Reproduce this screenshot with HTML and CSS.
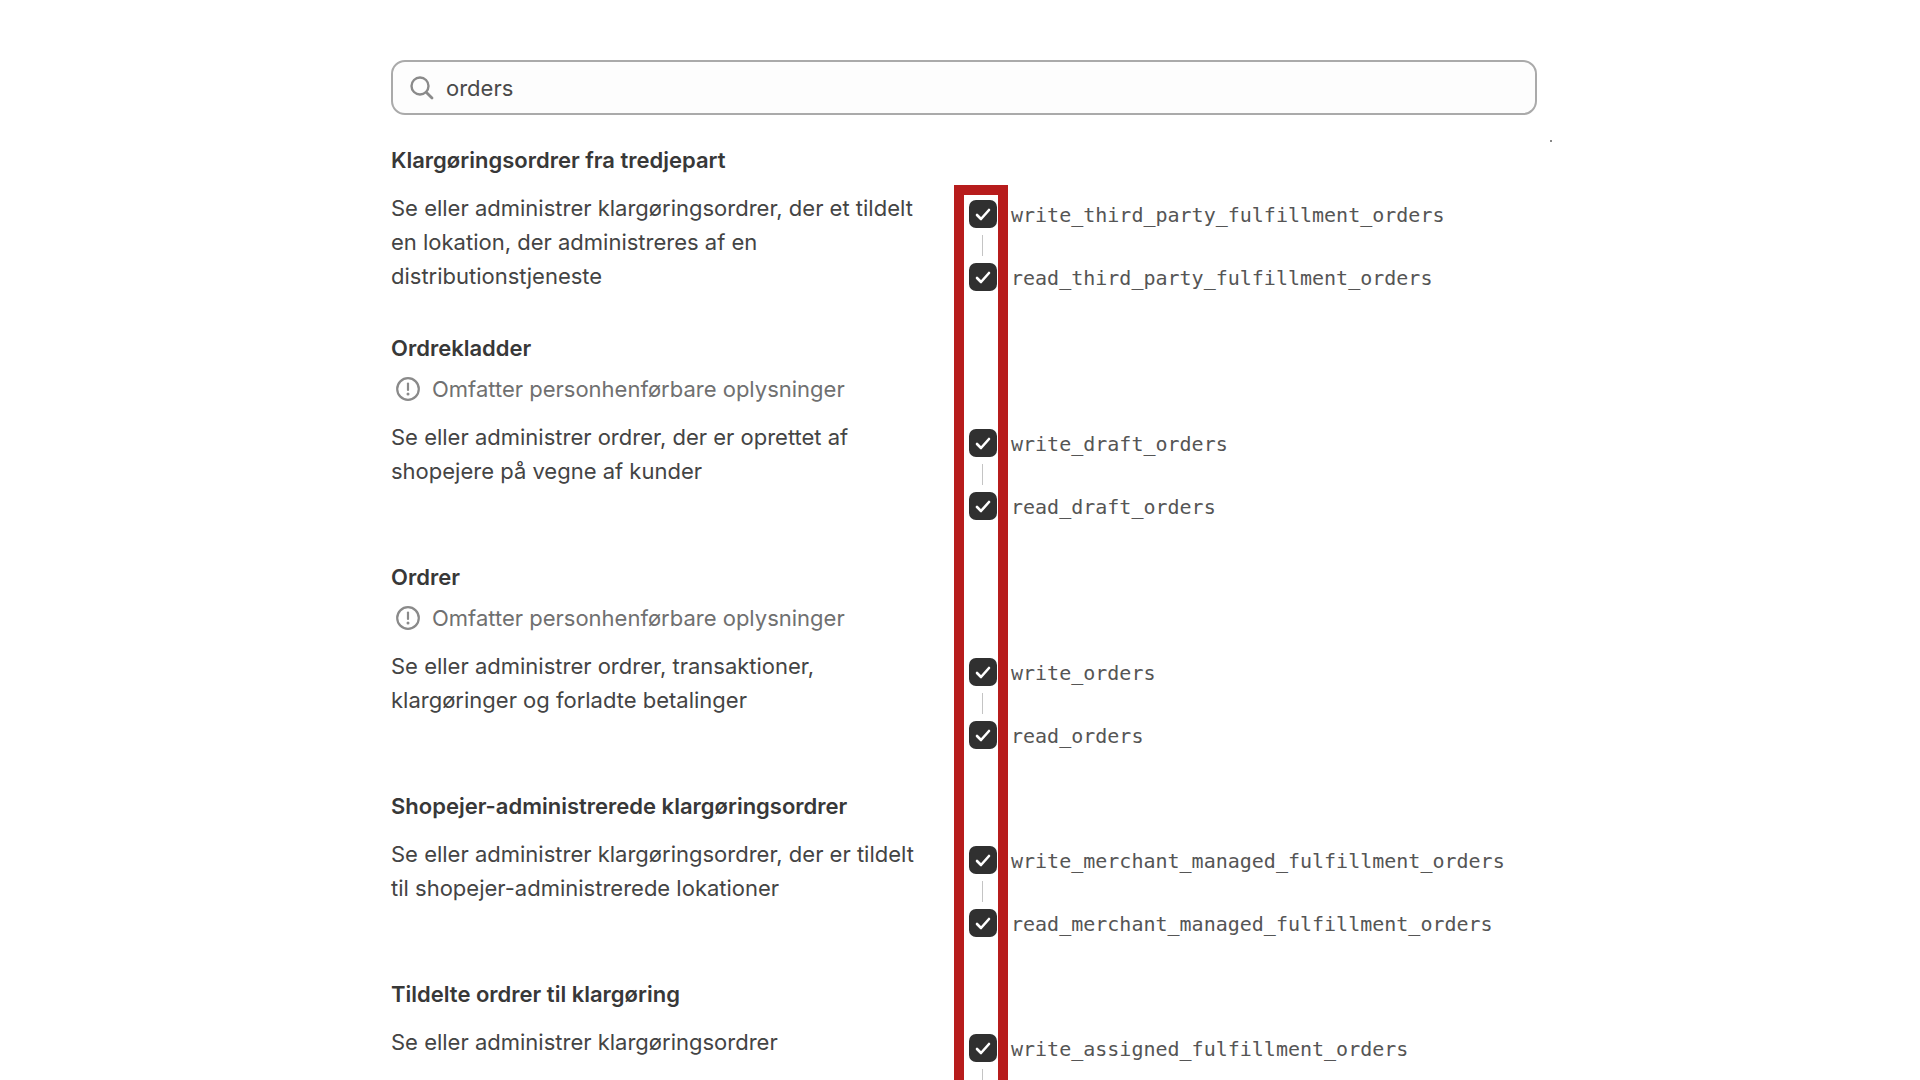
FILE: index.html
```html
<!DOCTYPE html>
<html lang="da">
<head>
    <meta charset="UTF-8">
    <meta name="viewport" content="width=device-width, initial-scale=1.0">
    <title>orders</title>
    <link rel="stylesheet" href="styles.css">
</head>
<body>
    <svg class="defs" width="0" height="0">
        <symbol id="check" viewBox="0 0 28 28">
            <path d="M8 15L12 19L20 10" fill="none" stroke="#fff" stroke-width="2.6" stroke-linecap="round" stroke-linejoin="round"/>
        </symbol>
        <symbol id="alert" viewBox="0 0 24 24">
            <circle cx="12" cy="12" r="10.8" fill="none" stroke="currentColor" stroke-width="2.2"/>
            <path d="M12 6.5V13" stroke="currentColor" stroke-width="2.2" stroke-linecap="round"/>
            <circle cx="12" cy="17" r="1.5" fill="currentColor"/>
        </symbol>
    </svg>

    <main class="page">
        <div class="search">
            <label for="search">
                <svg class="search-icon" viewBox="0 0 24 24" width="24" height="24" aria-label="orders">
                    <circle cx="10" cy="10" r="8.5" fill="none" stroke="currentColor" stroke-width="2.4"/>
                    <path d="M16.2 16.2L22 22" stroke="currentColor" stroke-width="2.8" stroke-linecap="round"/>
                </svg>
            </label>
            <input type="text" id="search" value="orders">
        </div>

        <div class="scopes">
            <section>
                <h2>Klargøringsordrer fra tredjepart</h2>
                <div class="row">
                    <p>Se eller administrer klargøringsordrer, der et tildelt en lokation, der administreres af en distributionstjeneste</p>
                    <ul>
                        <li><span class="box"><input type="checkbox" id="write_third" checked><svg><use href="#check"/></svg></span><label for="write_third">write_third_party_fulfillment_orders</label></li>
                        <li><span class="box"><input type="checkbox" id="read_third" checked><svg><use href="#check"/></svg></span><label for="read_third">read_third_party_fulfillment_orders</label></li>
                    </ul>
                </div>
            </section>

            <section>
                <h2>Ordrekladder</h2>
                <div class="note"><svg><use href="#alert"/></svg>Omfatter personhenførbare oplysninger</div>
                <div class="row">
                    <p>Se eller administrer ordrer, der er oprettet af shopejere på vegne af kunder</p>
                    <ul>
                        <li><span class="box"><input type="checkbox" id="write_draft" checked><svg><use href="#check"/></svg></span><label for="write_draft">write_draft_orders</label></li>
                        <li><span class="box"><input type="checkbox" id="read_draft" checked><svg><use href="#check"/></svg></span><label for="read_draft">read_draft_orders</label></li>
                    </ul>
                </div>
            </section>

            <section>
                <h2>Ordrer</h2>
                <div class="note"><svg><use href="#alert"/></svg>Omfatter personhenførbare oplysninger</div>
                <div class="row">
                    <p>Se eller administrer ordrer, transaktioner, klargøringer og forladte betalinger</p>
                    <ul>
                        <li><span class="box"><input type="checkbox" id="write_orders" checked><svg><use href="#check"/></svg></span><label for="write_orders">write_orders</label></li>
                        <li><span class="box"><input type="checkbox" id="read_orders" checked><svg><use href="#check"/></svg></span><label for="read_orders">read_orders</label></li>
                    </ul>
                </div>
            </section>

            <section>
                <h2>Shopejer-administrerede klargøringsordrer</h2>
                <div class="row">
                    <p>Se eller administrer klargøringsordrer, der er tildelt til shopejer-administrerede lokationer</p>
                    <ul>
                        <li><span class="box"><input type="checkbox" id="write_merchant" checked><svg><use href="#check"/></svg></span><label for="write_merchant">write_merchant_managed_fulfillment_orders</label></li>
                        <li><span class="box"><input type="checkbox" id="read_merchant" checked><svg><use href="#check"/></svg></span><label for="read_merchant">read_merchant_managed_fulfillment_orders</label></li>
                    </ul>
                </div>
            </section>

            <section>
                <h2>Tildelte ordrer til klargøring</h2>
                <div class="row">
                    <p>Se eller administrer klargøringsordrer</p>
                    <ul>
                        <li class="linked"><span class="box"><input type="checkbox" id="write_assigned" checked><svg><use href="#check"/></svg></span><label for="write_assigned">write_assigned_fulfillment_orders</label></li>
                    </ul>
                </div>
            </section>

            <div class="highlight"></div>
            <span class="speck"></span>
        </div>
    </main>
</body>
</html>
```

FILE: styles.css
```css
* {
    box-sizing: border-box;
}
body {
    margin: 0;
    height: 100vh;
    overflow: hidden;
    background: #fff;
    color: #444;
    font-family: Inter, sans-serif;
    font-size: 22px;
    line-height: 34px;
}
.defs {
    position: absolute;
}
.page {
    max-width: 1154px;
    margin: 0 auto;
    padding: 60px 0 0 8px;
}

/* search field */
.search {
    display: flex;
    align-items: center;
    gap: 12px;
    height: 55px;
    padding: 0 17px;
    border: 2px solid #aaa;
    border-radius: 14px;
    background: #fdfdfd;
}
.search label {
    display: flex;
}
.search-icon {
    color: #8a8a8a;
}
.search input {
    flex: 1;
    padding: 0;
    border: 0;
    outline: 0;
    background: none;
    color: #4a4a4a;
    font: inherit;
}

/* scope list */
.scopes {
    position: relative;
    margin-top: 28px;
}
h2 {
    margin: 0;
    color: #383838;
    font-size: 22px;
    font-weight: 600;
}
.note {
    display: flex;
    align-items: center;
    gap: 12px;
    height: 41px;
    padding: 7px 0 0 5px;
    color: #707070;
}
.note svg {
    width: 24px;
    height: 24px;
    overflow: visible;
    color: #8a8a8a;
}
.row {
    display: grid;
    grid-template-columns: calc(50% - 10px) 1fr;
    min-height: 154px;
    padding-top: 14px;
}
.row p {
    margin: 0;
    padding-right: 20px;
}
ul {
    margin: 0;
    padding: 9px 0 0 15px;
    list-style: none;
}
li {
    display: grid;
    grid-template-columns: 28px 1fr;
    column-gap: 14px;
    align-items: center;
}
li label {
    padding-top: 2px;
    color: #555;
    font-family: "DejaVu Sans Mono", monospace;
    font-size: 20px;
    line-height: 26px;
}
li:first-child:not(:last-child)::after,
.linked::after {
    content: "";
    width: 1px;
    height: 21px;
    margin: 7px 0 7px 13px;
    background: #c4c4c4;
}
.box {
    display: grid;
    height: 28px;
}
.box input,
.box svg {
    grid-area: 1 / 1;
    width: 28px;
    height: 28px;
    margin: 0;
}
.box input {
    appearance: none;
    border-radius: 7px;
    background: #303030;
}
.box svg {
    pointer-events: none;
    visibility: hidden;
}
.box input:checked + svg {
    visibility: visible;
}

/* red frame over the checkbox column */
.highlight {
    position: absolute;
    top: 42px;
    bottom: -20px;
    left: calc(50% - 10px);
    width: 54px;
    border: 10px solid #b71c1c;
    pointer-events: none;
}
.speck {
    position: absolute;
    top: -3px;
    right: -15px;
    width: 2px;
    height: 2px;
    background: #888;
}
```
